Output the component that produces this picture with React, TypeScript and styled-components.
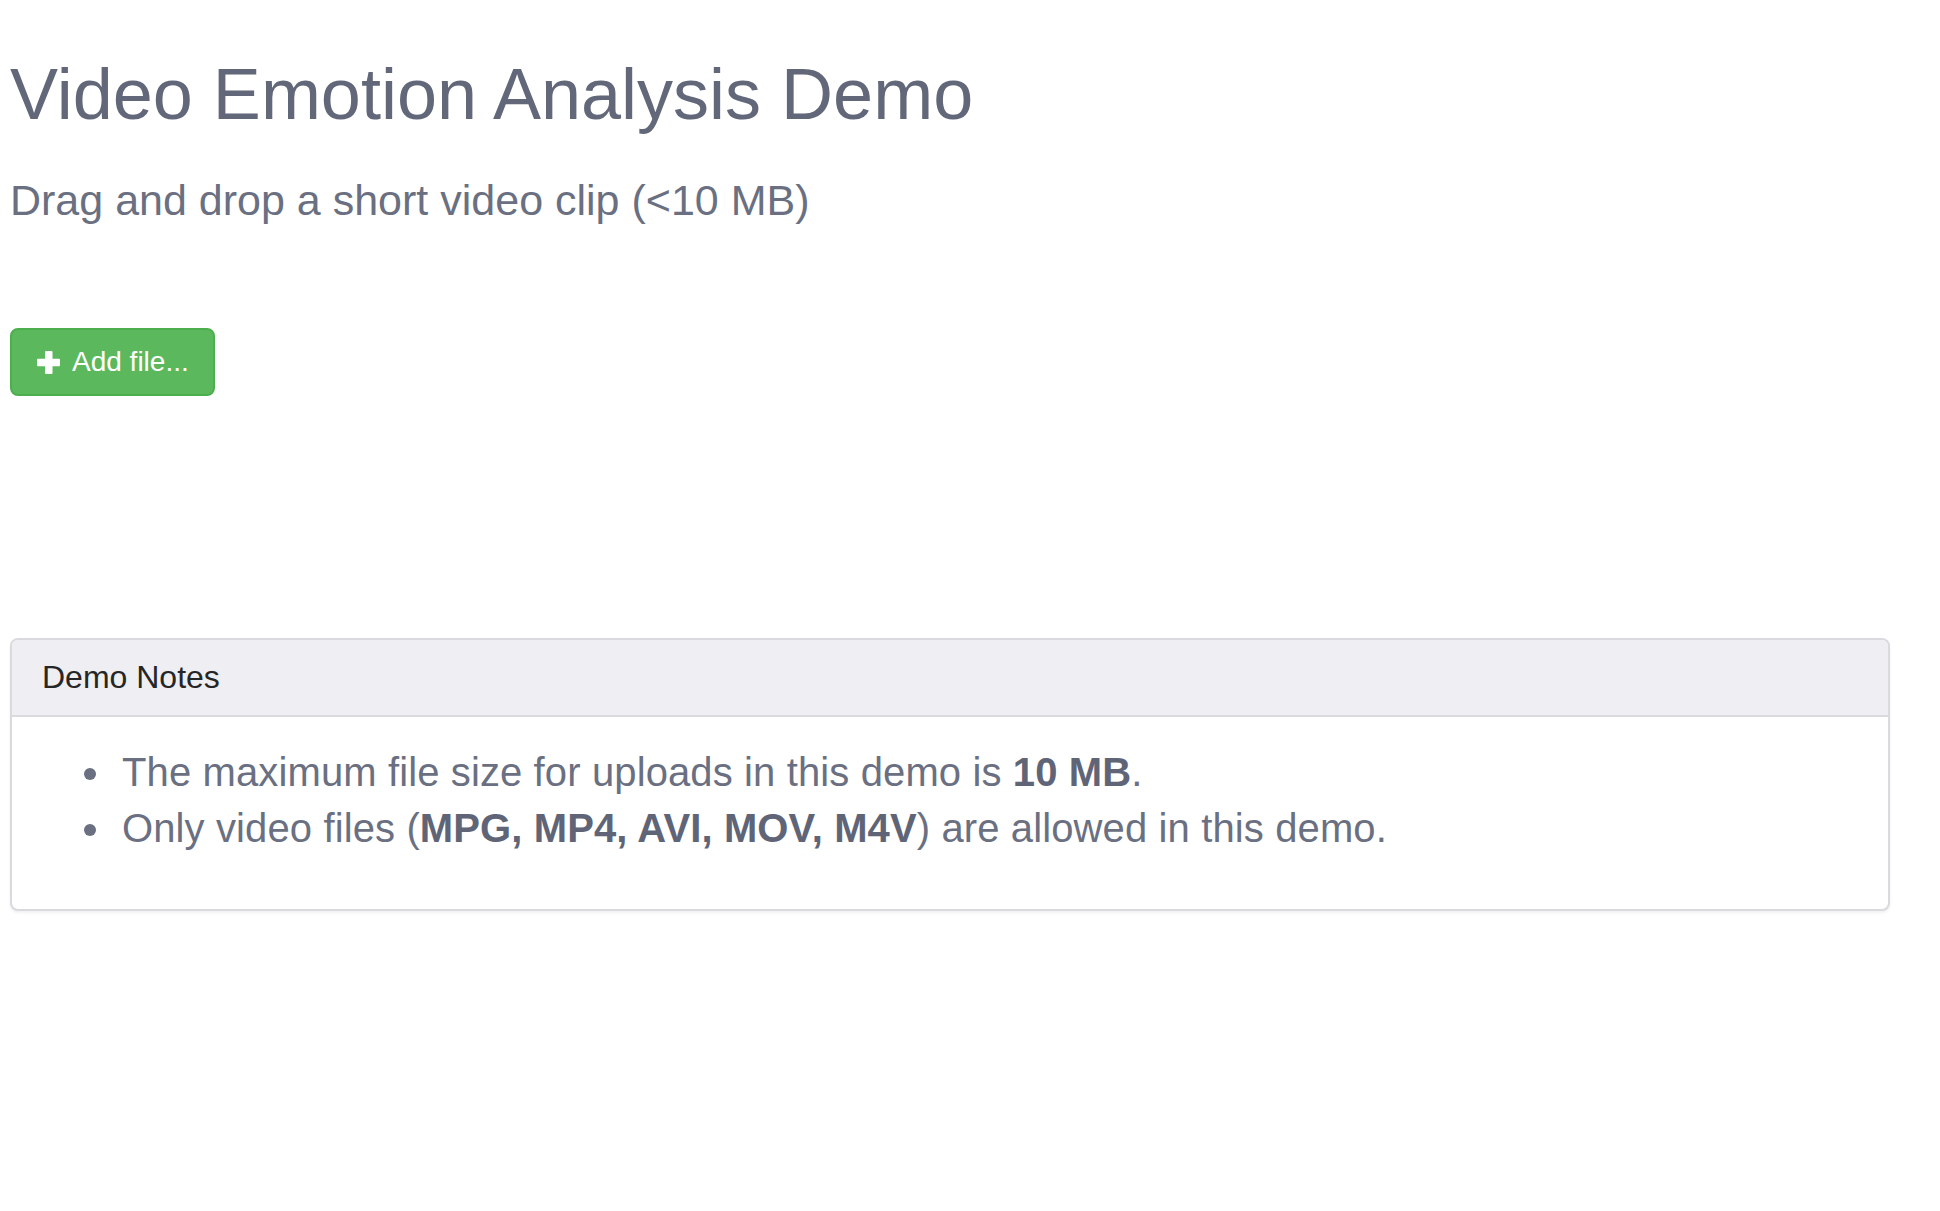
import React from "react";
import styled, { createGlobalStyle } from "styled-components";

const GlobalStyle = createGlobalStyle`
  html, body {
    margin: 0;
    padding: 0;
    background: #ffffff;
  }
  body {
    font-family: "Liberation Sans", Arial, Helvetica, sans-serif;
    color: #626879;
  }
`;

const Page = styled.div`
  padding: 10px 50px 10px 10px;
  display: flex;
  flex-direction: column;
  align-items: flex-start;
`;

const Title = styled.h1`
  margin: 45px 0 38px;
  font-size: 72px;
  line-height: 79px;
  font-weight: 400;
  color: #626879;
`;

const Lead = styled.p`
  margin: 0 0 100px;
  font-size: 43px;
  line-height: 56px;
  font-weight: 400;
  color: #6a7081;
`;

const AddButton = styled.button`
  display: inline-flex;
  align-items: center;
  gap: 11px;
  height: 68px;
  padding: 12px 24px;
  border: 2px solid #4cae4c;
  border-radius: 8px;
  background: #5cb85c;
  color: #ffffff;
  font-family: "Liberation Sans", Arial, sans-serif;
  font-size: 28px;
  line-height: 40px;
  cursor: pointer;
  margin-bottom: 242px;
`;

const Panel = styled.section`
  align-self: stretch;
  border: 2px solid #d9d9de;
  border-radius: 8px;
  background: #ffffff;
  box-shadow: 0 2px 3px rgba(0, 0, 0, 0.06);
  overflow: hidden;
`;

const PanelHeading = styled.div`
  padding: 20px 30px;
  background: #efeff3;
  border-bottom: 2px solid #d9d9de;
`;

const PanelTitle = styled.h3`
  margin: 0;
  font-size: 32px;
  line-height: 35px;
  font-weight: 400;
  color: #262626;
`;

const PanelBody = styled.div`
  padding: 27px 30px 33px;
`;

const Notes = styled.ul`
  margin: 0 0 20px;
  padding-left: 73px;
  font-size: 40px;
  line-height: 56px;
  letter-spacing: 0.12px;
  color: #6a7081;

  li {
    padding-left: 7px;
  }

  strong {
    font-weight: 700;
    color: #5f6577;
  }
`;

const PlusIcon = () => (
  <svg width="25" height="25" viewBox="0 0 25 25" aria-hidden="true">
    <rect x="9" y="1" width="7.5" height="23" rx="1" fill="#ffffff" />
    <rect x="1" y="8.75" width="23" height="7.5" rx="1" fill="#ffffff" />
  </svg>
);

const App: React.FC = () => {
  return (
    <>
      <GlobalStyle />
      <Page>
        <Title>Video Emotion Analysis Demo</Title>
        <Lead>Drag and drop a short video clip (&lt;10 MB)</Lead>
        <AddButton type="button">
          <PlusIcon />
          <span>Add file...</span>
        </AddButton>
        <Panel>
          <PanelHeading>
            <PanelTitle>Demo Notes</PanelTitle>
          </PanelHeading>
          <PanelBody>
            <Notes>
              <li>
                The maximum file size for uploads in this demo is{" "}
                <strong>10 MB</strong>.
              </li>
              <li>
                Only video files (<strong>MPG, MP4, AVI, MOV, M4V</strong>) are
                allowed in this demo.
              </li>
            </Notes>
          </PanelBody>
        </Panel>
      </Page>
    </>
  );
};

export default App;
